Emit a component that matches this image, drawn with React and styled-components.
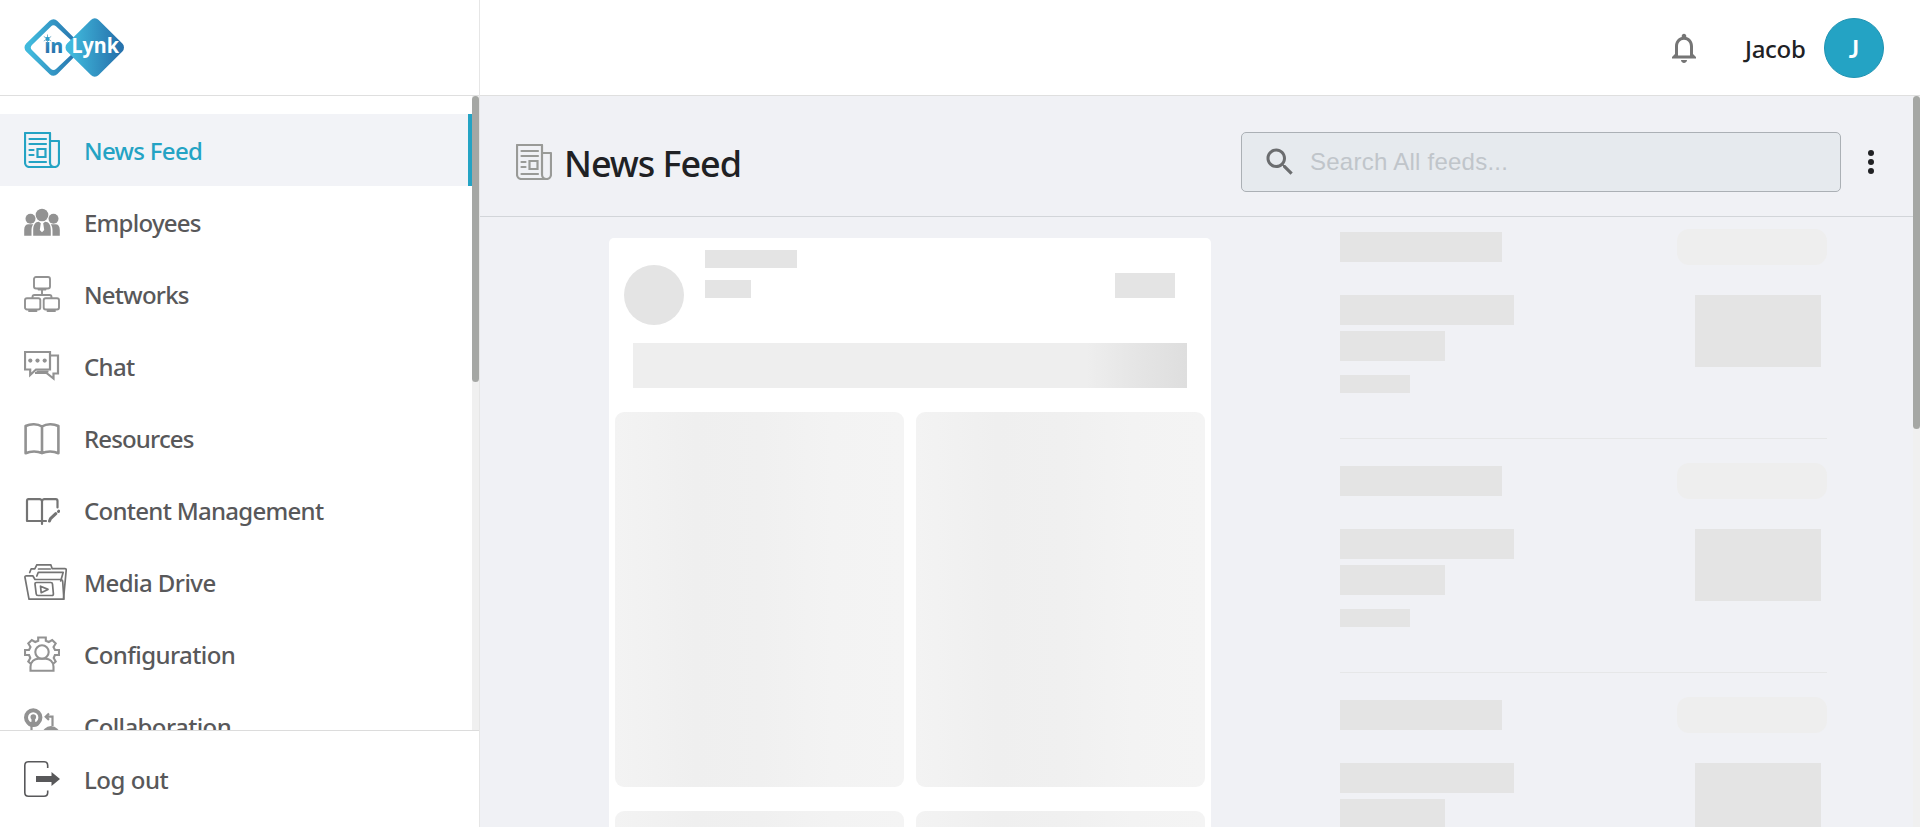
import React from "react";
import styled, { createGlobalStyle, css } from "styled-components";

const GlobalStyle = createGlobalStyle`
  *, *::before, *::after { box-sizing: border-box; }
  body {
    margin: 0;
    background: #fff;
    color: #202124;
    font-family: "Noto Sans", "Open Sans", sans-serif;
    overflow: hidden;
  }
`;

const Shell = styled.div`
  display: flex;
  width: 100vw;
  height: 100vh;
  overflow: hidden;
`;

/* ---------- sidebar ---------- */

const Sidebar = styled.aside`
  display: flex;
  flex-direction: column;
  flex: 0 0 480px;
  border-right: 1px solid #e6e6e6;
  background: #fff;
`;

const Brand = styled.div`
  flex: 0 0 96px;
  padding: 16px 0 0 22px;
  border-bottom: 1px solid #dfdfdf;
`;

const NavScroll = styled.div`
  display: flex;
  flex: 1;
  min-height: 0;
  overflow: hidden;
`;

const NavList = styled.nav`
  flex: 1;
  padding-top: 18px;
`;

const NavItem = styled.a`
  display: flex;
  align-items: center;
  height: 72px;
  padding-left: 24px;
  color: #58585a;
  ${(p) =>
    p.$active &&
    css`
      color: #24a3c4;
      background: #f2f3f7;
      border-right: 4px solid #24a3c4;
    `}
`;

const IconSlot = styled.span`
  display: flex;
  flex: 0 0 60px;
  height: 36px;
  color: ${(p) => p.$tone || "#929292"};
`;

const Label = styled.span`
  padding-top: 2px;
  font-size: 24px;
  line-height: 32px;
  font-weight: 500;
  white-space: nowrap;
  letter-spacing: ${(p) => p.$track || 0}px;
`;

const Track = styled.div`
  flex: 0 0 7px;
  background: #f0f0f0;
`;

const Thumb = styled.div`
  height: ${(p) => p.$h}px;
  border-radius: 4px;
  background: #a5a7a4;
`;

const Footer = styled.div`
  display: flex;
  align-items: center;
  flex: 0 0 97px;
  padding-left: 24px;
  border-top: 1px solid #dcdcdc;
  color: #58585a;
`;

/* ---------- main column ---------- */

const Main = styled.div`
  display: flex;
  flex-direction: column;
  flex: 1;
  min-width: 0;
`;

const TopBar = styled.header`
  display: flex;
  align-items: center;
  justify-content: flex-end;
  flex: 0 0 96px;
  padding-right: 36px;
  border-bottom: 1px solid #dfdfdf;
  background: #fff;
`;

const BellIcon = styled.svg`
  width: 36px;
  height: 36px;
  margin-right: 43px;
  fill: #757575;
`;

const UserName = styled.span`
  width: 79px;
  padding-top: 3px;
  font-size: 24px;
  font-weight: 500;
  line-height: 32px;
  letter-spacing: -0.3px;
`;

const Avatar = styled.div`
  display: flex;
  align-items: center;
  justify-content: center;
  width: 60px;
  height: 60px;
  padding-top: 2px;
  border: 1px solid #1f93b2;
  border-radius: 50%;
  background: #24a3c4;
  color: #fff;
  font-family: Lato, sans-serif;
  font-size: 24px;
  font-weight: 700;
`;

const Body = styled.div`
  display: flex;
  flex: 1;
  min-height: 0;
  background: #f0f1f5;
`;

const Page = styled.main`
  display: flex;
  flex-direction: column;
  flex: 1;
  min-width: 0;
`;

const PageHeader = styled.div`
  display: flex;
  align-items: center;
  flex: 0 0 121px;
  padding: 12px 33px 0 36px;
  border-bottom: 1px solid #d2d5d9;
`;

const TitleIcon = styled.span`
  display: flex;
  width: 48px;
  color: #999a97;
`;

const Title = styled.h1`
  flex: 1;
  margin: 4px 0 0;
  font-size: 36px;
  font-weight: 500;
  line-height: 48px;
  letter-spacing: -1.05px;
  color: #202124;
`;

const SearchBox = styled.label`
  display: flex;
  align-items: center;
  width: 600px;
  height: 60px;
  padding-left: 20px;
  border: 1px solid #abb0b5;
  border-radius: 5px;
  background: #e6eaee;
`;

const SearchIcon = styled.svg`
  width: 36px;
  height: 36px;
  margin-right: 12px;
  fill: #6b6d6f;
`;

const SearchInput = styled.input`
  flex: 1;
  padding: 0;
  border: 0;
  outline: 0;
  background: transparent;
  font: 24px "Liberation Sans", sans-serif;
  letter-spacing: 0.25px;
  &::placeholder { color: #c0c5ca; opacity: 1; }
`;

const Kebab = styled.svg`
  width: 18px;
  height: 36px;
  margin-left: 21px;
  fill: #202124;
`;

const Columns = styled.div`
  display: flex;
  flex: 1;
  min-height: 0;
  padding-left: 129px;
  overflow: hidden;
`;

/* ---------- skeletons ---------- */

const Bone = styled.div`
  flex: none;
  width: ${(p) => p.$w}px;
  height: ${(p) => p.$h}px;
  margin-top: ${(p) => p.$mt || 0}px;
  border-radius: ${(p) => p.$r || "0"};
  background: ${(p) => p.$bg || "#e4e4e4"};
`;

const FeedCard = styled.section`
  flex: 0 0 602px;
  align-self: flex-start;
  margin-top: 21px;
  padding: 12px 6px 0;
  border-radius: 5px;
  background: #fff;
`;

const CardHead = styled.div`
  display: flex;
  height: 93px;
  padding: 0 30px 0 9px;
`;

const HeadLines = styled.div`
  display: flex;
  flex-direction: column;
  flex: 1;
  gap: 12px;
  padding-left: 21px;
`;

const TextBone = styled.div`
  height: 45px;
  margin: 0 18px 24px;
  background: linear-gradient(90deg, #eeeeee 0%, #eeeeee 82%, #e5e5e5 91%, #dedede 100%);
`;

const MediaGrid = styled.div`
  display: grid;
  grid-template-columns: 1fr 1fr;
  grid-auto-rows: 375px;
  gap: 24px 12px;
`;

const MediaBone = styled.div`
  border-radius: 9px;
  background: linear-gradient(90deg, #f3f3f3 0%, #efefef 28%, #f0f0f0 50%, #f3f3f3 75%, #f4f4f4 100%);
`;

const Aside = styled.aside`
  flex: 0 0 487px;
  margin-left: 129px;
`;

const AsideBlock = styled.div`
  height: 234px;
  padding-top: 12px;
  border-bottom: 1px solid #e6e7e8;
  &:first-child { height: 222px; padding-top: 0; }
`;

const AsideTop = styled.div`
  display: flex;
  justify-content: space-between;
  height: 66px;
`;

const AsideRow = styled.div`
  display: flex;
  justify-content: space-between;
  padding-right: 6px;
`;

const Stack = styled.div`
  display: flex;
  flex-direction: column;
`;

/* ---------- icons ---------- */

const Svg = ({ w = 36, sw = 2.2, children }) => (
  <svg width={w} height="36" viewBox={`0 0 ${w} 36`} fill="none" stroke="currentColor"
    strokeWidth={sw} strokeLinecap="round" strokeLinejoin="round">
    {children}
  </svg>
);

const NewsIcon = () => (
  <Svg>
    <path d="M26 9V1H1v29.500A4.500 4.500 0 0 0 5.500 35H30.500A4.500 4.500 0 0 0 35 30.500V9H26V30.500A4.500 4.500 0 0 0 30.500 35" />
    <path d="M5.500 7H22M5.500 12H22M5.500 18H9.500M5.500 23H9.500M5.500 30H22" />
    <path d="M13.500 17h8v8h-8z" strokeLinejoin="miter" />
  </Svg>
);

const PeopleIcon = () => (
  <Svg>
    <g fill="currentColor" stroke="none">
      <circle cx="18" cy="11" r="6.300" />
      <circle cx="6.500" cy="14.700" r="5" />
      <circle cx="29.500" cy="14.700" r="5" />
      <path d="M.2 31.700V26c0-3.700 1.600-5.700 4.300-5.700h4.700c-1.300 2-1.700 4-1.700 6.500v4.900z" />
      <path d="M35.800 31.700V26c0-3.700-1.600-5.700-4.300-5.700h-4.700c1.300 2 1.700 4 1.700 6.500v4.900z" />
      <path d="M9.200 31.700V26c0-5 2-8.200 5.700-8.200l1.900 1.500-1 6.700 2.200 2.300 2.200-2.300-1-6.700 1.900-1.500c3.700 0 5.700 3.200 5.700 8.200v5.700z" />
    </g>
  </Svg>
);

const NetworkIcon = () => (
  <Svg sw={1.9}>
    <rect x="10" y="1" width="16" height="11.500" rx="2" />
    <rect x="1" y="22.300" width="15.300" height="11.200" rx="2" />
    <rect x="19.700" y="22.300" width="15.300" height="11.200" rx="2" />
    <path d="M14.500 13.500h7M5 35h7.500M23.500 35H31M18 14v5M8.500 22v-1a2 2 0 0 1 2-2h15a2 2 0 0 1 2 2v1" />
  </Svg>
);

const ChatIcon = () => (
  <Svg>
    <g strokeLinejoin="miter" strokeLinecap="butt">
      <path d="M1 4h25v17.500H12L6.200 27v-5.500H1z" />
      <path d="M26 7.500h8V25.500h-4.500V30.500L22.500 25H11M12.500 23.500h12" />
    </g>
    <g fill="currentColor" stroke="none">
      <circle cx="6.300" cy="12.600" r="2.100" /><circle cx="13.500" cy="12.600" r="2.100" /><circle cx="20.700" cy="12.600" r="2.100" />
    </g>
  </Svg>
);

const BookIcon = () => (
  <Svg sw={2.6}>
    <path d="M18 6.500C13.500 3.500 6.500 3.500 1.600 6V33.200c5-2.300 12-2.300 16.400 0 4.500-2.300 11.500-2.300 16.400 0V6C29.500 3.500 22.500 3.500 18 6.500zV33" />
  </Svg>
);

const ContentIcon = () => (
  <Svg>
    <path d="M18 32V9.500c0-1.500-1-2.300-2.500-2.300H4.500C3.500 7.200 3 8 3 9v20h19M18 9.500c0-1.500 1-2.300 2.500-2.300h11.300c1 0 1.700.8 1.700 1.800v6.500" />
    <path d="M25.500 29l1-2.300 5.300-5M34.500 19.500l.3-.3" strokeWidth="3" />
  </Svg>
);

const MediaIcon = () => (
  <Svg w={43} sw={1.7}>
    <path d="M5 35.200L1 13.500q-.3-1.700 1.500-1.700h6.300l2.200 3.700h25.500q2 0 2.200 2l1.200 17.700z" />
    <path d="M5.700 8.500l1.500-3.700h3.600l2-4h14l1.400 3.900h12.700q1.600 0 1.300 1.600L39.500 35" />
    <path d="M14.500 5h11.700M12.800 12l1.500-3.700h24.900L36.700 17" />
    <path d="M12.500 18.500h14.300q1.600 0 1.700 1.600l.9 9.800q.1 1.600-1.500 1.600H14q-1.600 0-1.800-1.600l-1.200-9.800q-.1-1.600 1.500-1.600zM16.500 22.200l7.500 3.200-6.800 3.300z" />
  </Svg>
);

const GearUserIcon = () => (
  <Svg sw={2.1}>
    <g strokeLinejoin="miter" strokeLinecap="butt">
      <path d="M6.500 27.500L4.300 25.500l2-3.500-1.200-3H1v-5h4l1.500-3L4.300 7.500 7.800 4l3.400 2 3-1.300V1.500h7.600v3.200l3 1.300 3.400-2 3.500 3.500-2.200 3.500 1.500 3h4v5h-4.100l-1.200 3 2 3.500-2.200 2" />
      <circle cx="18" cy="16" r="6.700" />
      <path d="M6.500 34.700v-4c0-5 4-8 8-8h7c4 0 8 3 8 8v4z" />
    </g>
  </Svg>
);

const CollabIcon = () => (
  <Svg>
    <circle cx="9.200" cy="9.500" r="7.200" strokeWidth="4" />
    <g fill="currentColor" stroke="none">
      <circle cx="9.300" cy="9" r="2.800" />
      <path d="M7.500 10.500h3.600v3.200c2 .2 3.400 1 4.200 2.800-1.500 1.800-3.700 2.500-6 2.500s-4.500-.7-6-2.500c.8-1.800 2.200-2.600 4.200-2.800z" />
      <circle cx="27" cy="27" r="9" />
    </g>
    <path d="M7.500 18v10M28.500 18V8.700H22M25 5.500l-3.300 3.200 3.300 3.200" strokeLinejoin="miter" strokeLinecap="butt" />
  </Svg>
);

const LogoutIcon = () => (
  <Svg sw={1.6}>
    <path d="M23.700 7V4.500Q23.700.8 20 .8H4.500Q.8.800.8 4.500v27q0 3.700 3.700 3.700H20q3.700 0 3.700-3.700V29.500" strokeLinecap="butt" />
    <path d="M12 15h15.500v-4L36 18l-8.500 7v-4H12z" fill="currentColor" stroke="none" />
  </Svg>
);

const Logo = () => (
  <svg width="106" height="64" viewBox="0 0 106 64">
    <defs>
      <linearGradient id="ring" x1="0" x2="1"><stop offset="0" stopColor="#40b9dc" /><stop offset="1" stopColor="#2773ad" /></linearGradient>
      <linearGradient id="word" x1="0" x2="0" y1="0" y2="1"><stop offset="0" stopColor="#35a6d0" /><stop offset="1" stopColor="#2463a0" /></linearGradient>
    </defs>
    <g strokeLinejoin="round">
      <path d="M31.500 8.800L54 31.500 31.500 54.200 8 31.500z" fill="url(#ring)" stroke="url(#ring)" strokeWidth="11" />
      <path d="M31.500 13.500L51 31.500 31.500 49.800 13 31.500z" fill="#fff" stroke="#fff" strokeWidth="8" />
      <path d="M72.800 7.800L96.500 31.500 72.800 55.200 49 31.500z" fill="url(#ring)" stroke="url(#ring)" strokeWidth="11" />
    </g>
    <text x="22.500" y="37" fontFamily="Noto Sans, sans-serif" fontWeight="800" fontSize="20" fill="url(#word)" textLength="18.500" lengthAdjust="spacingAndGlyphs">in</text>
    <path d="M25.500 18.500v8M21.800 20.500l7.400 4.500M29.200 20.500l-7.400 4.500" stroke="#7ab3cd" strokeWidth="1" />
    <circle cx="25.500" cy="22.700" r="1.900" fill="#2b9dcc" />
    <text x="49.500" y="37" fontFamily="Noto Sans, sans-serif" fontWeight="700" fontSize="20.500" fill="#fff" textLength="47.500" lengthAdjust="spacingAndGlyphs">Lynk</text>
  </svg>
);

const NAV = [
  { label: "News Feed", icon: NewsIcon, active: true, tone: "#24a3c4", track: -0.68 },
  { label: "Employees", icon: PeopleIcon, track: -0.75 },
  { label: "Networks", icon: NetworkIcon, track: -0.77 },
  { label: "Chat", icon: ChatIcon, track: -0.7 },
  { label: "Resources", icon: BookIcon, track: -0.85 },
  { label: "Content Management", icon: ContentIcon, tone: "#747474", track: -0.72 },
  { label: "Media Drive", icon: MediaIcon, tone: "#747474", track: -0.55 },
  { label: "Configuration", icon: GearUserIcon, track: -0.57 },
  { label: "Collaboration", icon: CollabIcon, track: -0.6 },
];

const SuggestionSkeleton = () => (
  <AsideBlock>
    <AsideTop>
      <Bone $w={162} $h={30} $mt={15} />
      <Bone $w={150} $h={36} $mt={12} $r="12px" $bg="#eeeeee" />
    </AsideTop>
    <AsideRow>
      <Stack>
        <Bone $w={174} $h={30} $mt={12} />
        <Bone $w={105} $h={30} $mt={6} />
        <Bone $w={70} $h={18} $mt={14} />
      </Stack>
      <Bone $w={126} $h={72} $mt={12} />
    </AsideRow>
  </AsideBlock>
);

export default function App() {
  return (
    <Shell>
      <GlobalStyle />
      <Sidebar>
        <Brand><Logo /></Brand>
        <NavScroll>
          <NavList>
            {NAV.map(({ label, icon: Icon, active, tone, track }) => (
              <NavItem key={label} $active={active}>
                <IconSlot $tone={tone}><Icon /></IconSlot>
                <Label $track={track}>{label}</Label>
              </NavItem>
            ))}
          </NavList>
          <Track><Thumb $h={286} /></Track>
        </NavScroll>
        <Footer>
          <IconSlot $tone="#58585a"><LogoutIcon /></IconSlot>
          <Label $track={-0.45}>Log out</Label>
        </Footer>
      </Sidebar>
      <Main>
        <TopBar>
          <BellIcon viewBox="0 0 24 24">
            <path d="M12 22c1.100 0 2-.9 2-2h-4c0 1.100.9 2 2 2zm6-6v-5c0-3.070-1.630-5.640-4.500-6.320V4c0-.83-.67-1.500-1.500-1.500s-1.500.67-1.500 1.500v.68C7.640 5.360 6 7.920 6 11v5l-2 2v1h16v-1l-2-2zm-2 1H8v-6c0-2.480 1.510-4.500 4-4.500s4 2.020 4 4.500v6z" />
          </BellIcon>
          <UserName>Jacob</UserName>
          <Avatar>J</Avatar>
        </TopBar>
        <Body>
          <Page>
            <PageHeader>
              <TitleIcon><NewsIcon /></TitleIcon>
              <Title>News Feed</Title>
              <SearchBox>
                <SearchIcon viewBox="0 0 24 24">
                  <path d="M15.500 14h-.79l-.28-.27C15.410 12.590 16 11.110 16 9.500 16 5.910 13.090 3 9.500 3S3 5.910 3 9.500 5.910 16 9.500 16c1.610 0 3.090-.59 4.230-1.570l.27.28v.79l5 4.990L20.490 19l-4.990-5zm-6 0C7.010 14 5 11.990 5 9.500S7.010 5 9.500 5 14 7.010 14 9.500 11.990 14 9.500 14z" />
                </SearchIcon>
                <SearchInput placeholder="Search All feeds..." />
              </SearchBox>
              <Kebab viewBox="0 0 18 36">
                <circle cx="9" cy="9" r="3" /><circle cx="9" cy="18" r="3" /><circle cx="9" cy="27" r="3" />
              </Kebab>
            </PageHeader>
            <Columns>
              <FeedCard>
                <CardHead>
                  <Bone $w={60} $h={60} $mt={15} $r="50%" />
                  <HeadLines>
                    <Bone $w={92} $h={18} />
                    <Bone $w={46} $h={18} />
                  </HeadLines>
                  <Bone $w={60} $h={25} $mt={23} />
                </CardHead>
                <TextBone />
                <MediaGrid>
                  <MediaBone /><MediaBone /><MediaBone /><MediaBone />
                </MediaGrid>
              </FeedCard>
              <Aside>
                <SuggestionSkeleton />
                <SuggestionSkeleton />
                <SuggestionSkeleton />
              </Aside>
            </Columns>
          </Page>
          <Track><Thumb $h={333} /></Track>
        </Body>
      </Main>
    </Shell>
  );
}
